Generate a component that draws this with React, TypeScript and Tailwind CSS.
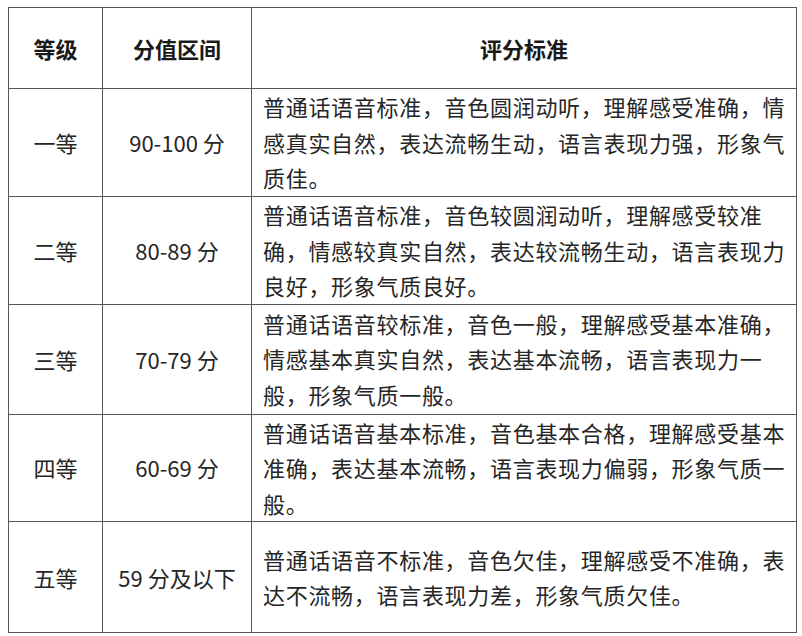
const rows = [
  {
    level: '一等',
    range: '90-100 分',
    desc: '普通话语音标准，音色圆润动听，理解感受准确，情感真实自然，表达流畅生动，语言表现力强，形象气质佳。',
    h: 'h-[108px]',
  },
  {
    level: '二等',
    range: '80-89 分',
    desc: '普通话语音标准，音色较圆润动听，理解感受较准确，情感较真实自然，表达较流畅生动，语言表现力良好，形象气质良好。',
    h: 'h-[107px]',
  },
  {
    level: '三等',
    range: '70-79 分',
    desc: '普通话语音较标准，音色一般，理解感受基本准确，情感基本真实自然，表达基本流畅，语言表现力一般，形象气质一般。',
    h: 'h-[110px]',
  },
  {
    level: '四等',
    range: '60-69 分',
    desc: '普通话语音基本标准，音色基本合格，理解感受基本准确，表达基本流畅，语言表现力偏弱，形象气质一般。',
    h: 'h-[107px]',
  },
  {
    level: '五等',
    range: '59 分及以下',
    desc: '普通话语音不标准，音色欠佳，理解感受不准确，表达不流畅，语言表现力差，形象气质欠佳。',
    h: 'h-[111px]',
  },
]

export default function App() {
  return (
    <div
      className="min-h-screen bg-white pl-[8px] pt-[7px] text-[#262626]"
      style={{ fontFamily: '"Noto Sans CJK SC", "Noto Sans", sans-serif' }}
    >
      <table className="w-[788px] table-fixed border-collapse text-[22px]">
        <colgroup>
          <col className="w-[94px]" />
          <col className="w-[149px]" />
          <col className="w-[545px]" />
        </colgroup>
        <thead>
          <tr className="h-[81px]">
            {['等级', '分值区间', '评分标准'].map((t) => (
              <th
                key={t}
                className="border-[1.5px] border-[#555] text-center align-middle font-bold text-[#1a1a1a]"
              >
                {t}
              </th>
            ))}
          </tr>
        </thead>
        <tbody>
          {rows.map((r) => (
            <tr key={r.level} className={r.h}>
              <td className="border-[1.5px] border-[#555] text-center align-middle">{r.level}</td>
              <td className="border-[1.5px] border-[#555] text-center align-middle">{r.range}</td>
              <td className="border-[1.5px] border-[#555] pl-[11px] pr-[5px] align-middle leading-[35.5px] tracking-[0.7px]">
                {r.desc}
              </td>
            </tr>
          ))}
        </tbody>
      </table>
    </div>
  )
}
